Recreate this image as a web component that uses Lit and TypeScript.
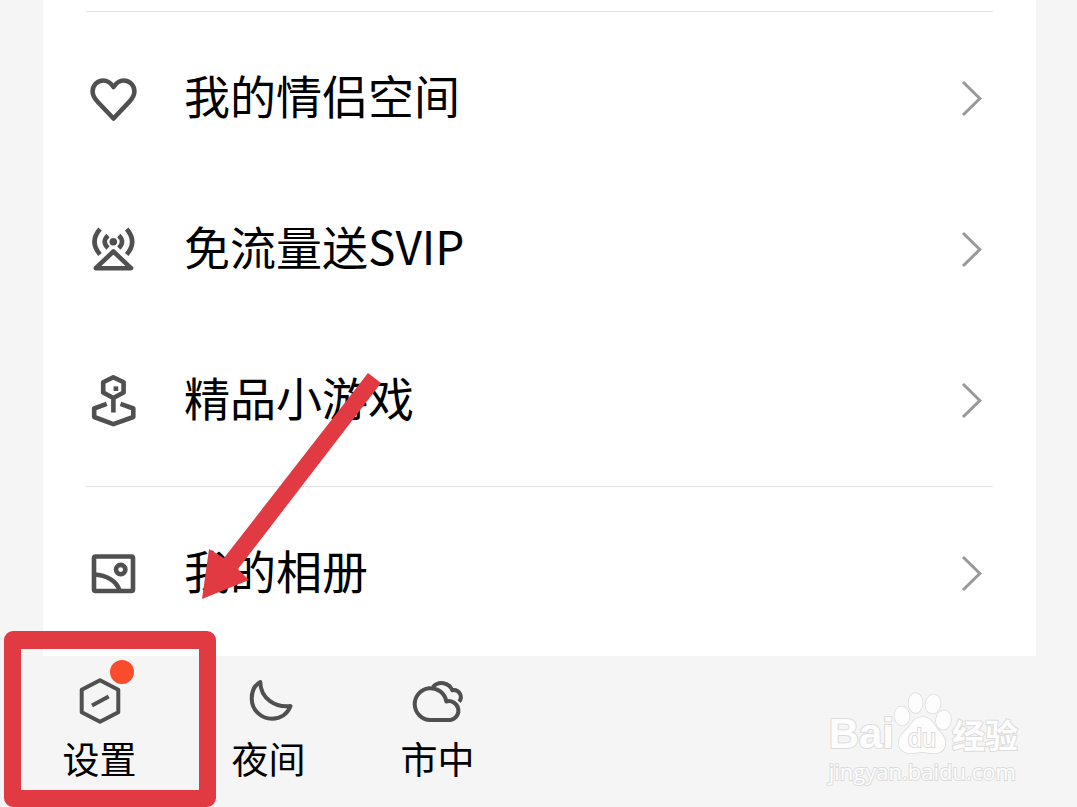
import { LitElement, html, css, svg } from "lit";
import { customElement } from "lit/decorators.js";

const heart = svg`<path d="M27.5 15C24.5 10.5 21 8.5 17.4 8.5C11 8.5 6.6 13.6 6.6 19.6C6.6 23.6 8.6 26.6 11.6 29.8L27.5 46.5L43.2 29.8C46.4 26.6 48.4 23.6 48.4 19.6C48.4 13.6 44 8.5 37.6 8.5C34 8.5 30.5 10.5 27.5 15Z"/>`;
const antenna = svg`
  <circle class="solid" cx="27.3" cy="18.8" r="3.8"/>
  <path d="M22 12.500Q15.400 18.800 22 25M32.800 12.500Q39.300 18.800 32.800 25M14 6Q3 18.800 14 31.500M40.700 6Q51.700 18.800 40.700 31.500M27.400 28.500L45 45.200H9.800Z"/>`;
const joystick = svg`
  <path d="M27.300 3.300L37.600 8.300V18.500L27.300 24L17.200 18.500V8.300ZM27.400 24V38.500M20.700 29.800L8.200 34.500V43L27.400 50.200L47.300 43V34.500L34.500 29.800"/>
  <rect class="solid" x="27.600" y="12.400" width="4.600" height="4.600"/>`;
const album = svg`
  <rect x="8" y="9.500" width="39" height="34.500" rx="1.500"/>
  <circle cx="34.700" cy="22.600" r="4.700"/>
  <path d="M8.500 27.500C20 28 31 34 33.500 43.500"/>`;

const hexagon = svg`<path d="M26 5.200L44.300 14.800V37.300L26 46.800L7.700 37.300V14.800ZM18 30.600L34.700 21.600"/>`;
const moon = svg`<path d="M17.300 7C11.200 10.500 8.700 17 8.700 23.500C8.700 35 18 43.700 29 43.700C37.500 43.700 44.500 39 47.500 31C33 33 17.500 24 17.300 7Z"/>`;
const cloud = svg`
  <path d="M18.300 45A15.900 15.900 0 1 1 34.300 26.500A9.500 9.500 0 1 1 38.500 45ZM21 12A11.500 11.500 0 0 1 40.300 15.200A7 7 0 0 1 47 26.700"/>`;

const groups = [
  [
    { label: "我的情侣空间", icon: heart },
    { label: "免流量送SVIP", icon: antenna },
    { label: "精品小游戏", icon: joystick },
  ],
  [{ label: "我的相册", icon: album }],
];

const tabs = [
  { label: "设置", icon: hexagon, dot: true },
  { label: "夜间", icon: moon, dot: false },
  { label: "市中", icon: cloud, dot: false },
];

@customElement("app-root")
class AppRoot extends LitElement {
  static styles = css`
    :host {
      display: block;
      font-family: "Noto Sans CJK SC", sans-serif;
      color: #000;
    }
    .page {
      position: relative;
      display: flex;
      flex-direction: column;
      min-height: 100vh;
      box-sizing: border-box;
      overflow: hidden;
      background: #f5f5f5;
    }
    .card {
      margin: 0 41px 0 43px;
      padding: 11px 43px 7px;
      background: #fff;
    }
    .group {
      padding: 11px 0 10px;
      border-top: 1px solid #e2e2e2;
    }
    .group:last-child {
      padding-bottom: 0;
    }
    .row {
      display: flex;
      align-items: center;
      height: 151px;
      padding-right: 10px;
      color: inherit;
      text-decoration: none;
    }
    .row-label {
      flex: 1;
      margin-left: 44px;
      padding-bottom: 10px;
      font-size: 46px;
      line-height: 60px;
    }
    svg {
      display: block;
      flex: none;
      overflow: visible;
    }
    .icon {
      fill: none;
      stroke: #505050;
      stroke-width: 4.6;
      stroke-linejoin: round;
    }
    .tab-icon {
      stroke-width: 4;
    }
    .solid {
      fill: #505050;
      stroke: none;
    }
    .chevron {
      fill: none;
      stroke: #999;
      stroke-width: 3;
    }
    .bar {
      display: flex;
      justify-content: space-between;
      align-items: flex-start;
      padding: 19px 59px 0 15px;
    }
    .tabs {
      display: flex;
    }
    .tab {
      display: flex;
      flex-direction: column;
      align-items: center;
      gap: 11px;
      width: 169px;
      padding: 0;
      border: 0;
      background: none;
      color: inherit;
      font: 37px/40px "Noto Sans CJK SC", sans-serif;
    }
    .tab-art {
      position: relative;
    }
    .dot {
      position: absolute;
      top: -15px;
      right: -8px;
      width: 24px;
      height: 24px;
      border-radius: 50%;
      background: #fa4b2c;
    }
    .mark {
      display: flex;
      flex-direction: column;
      padding-top: 16px;
      color: #fdfdfd;
      -webkit-text-stroke: 2px #dcdcdc;
      paint-order: stroke fill;
    }
    .brand {
      display: flex;
      align-items: flex-end;
      height: 64px;
      font-weight: 700;
    }
    .latin {
      font: 700 42px/42px "Liberation Sans", sans-serif;
    }
    .han {
      font-size: 33px;
      line-height: 42px;
    }
    .site {
      font: 22px/32px "Open Sans", sans-serif;
    }
    .paw {
      fill: #fdfdfd;
      stroke: #dcdcdc;
      stroke-width: 1.5;
    }
    .du {
      font: 25px "Liberation Sans", sans-serif;
      stroke-width: 2;
    }
    .frame {
      position: absolute;
      left: 4px;
      top: 631px;
      width: 212px;
      height: 176px;
      box-sizing: border-box;
      border: 17px solid #e23a43;
      border-top-width: 18px;
      border-radius: 9px;
      pointer-events: none;
    }
    .arrow {
      position: absolute;
      left: 200px;
      top: 370px;
      fill: #e23a43;
      pointer-events: none;
    }
  `;

  render() {
    return html`
      <div class="page">
        <nav class="card">
          ${groups.map(
            (rows) => html`<div class="group">
              ${rows.map(
                (row) => html`<a class="row" href="#">
                  <svg class="icon" width="54" height="54" viewBox="0 0 54 54" aria-hidden="true">${row.icon}</svg>
                  <span class="row-label">${row.label}</span>
                  <svg class="chevron" width="22" height="36" viewBox="0 0 22 36" aria-hidden="true">
                    <path d="M2 1L18.800 17.500L2 34" />
                  </svg>
                </a>`
              )}
            </div>`
          )}
        </nav>
        <footer class="bar">
          <div class="tabs">
            ${tabs.map(
              (tab) => html`<button class="tab" type="button">
                <span class="tab-art">
                  <svg class="icon tab-icon" width="52" height="52" viewBox="0 0 52 52" aria-hidden="true">${tab.icon}</svg>
                  ${tab.dot ? html`<span class="dot"></span>` : ""}
                </span>
                <span>${tab.label}</span>
              </button>`
            )}
          </div>
          <div class="mark">
            <div class="brand">
              <span class="latin">Bai</span>
              <svg class="paw" width="58" height="64" viewBox="0 0 58 64">
                <ellipse cx="8" cy="25" rx="7.500" ry="9.500" transform="rotate(-8 8 25)" />
                <ellipse cx="21.500" cy="12" rx="7" ry="10" />
                <ellipse cx="39" cy="13" rx="7.500" ry="9.500" transform="rotate(12 39 13)" />
                <ellipse cx="49.500" cy="29" rx="7.500" ry="9.500" transform="rotate(8 49.500 29)" />
                <path d="M28.500 26C38 26 40 35 46 41C53 47 54 60 43 62C37 63 34 61 28.500 61C23 61 20 63 14 62C2 60 3 47 10 41C17 35 19 26 28.500 26Z" />
                <text class="du" x="28" y="56" text-anchor="middle">du</text>
              </svg>
              <span class="han">经验</span>
            </div>
            <span class="site">jingyan.baidu.com</span>
          </div>
        </footer>
        <div class="frame"></div>
        <svg class="arrow" width="184" height="232" viewBox="0 0 184 232" aria-hidden="true">
          <path d="M2 229L9 179L24 188L168 3L181 13L38 199L49 210Z" />
        </svg>
      </div>
    `;
  }
}
